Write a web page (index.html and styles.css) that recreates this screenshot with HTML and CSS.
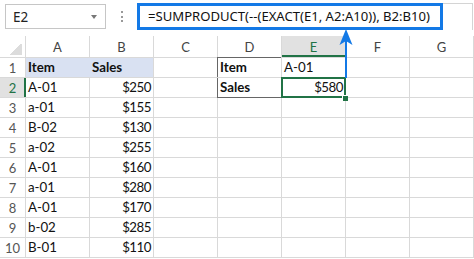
FILE: index.html
```html
<!DOCTYPE html>
<html lang="en">
<head>
  <meta charset="UTF-8">
  <title>SUMPRODUCT EXACT</title>
  <link rel="stylesheet" href="styles.css">
</head>
<body>
  <div class="sheet">

    <!-- Formula bar -->
    <div class="formula-bar">
      <div class="name-box"><span>E2</span><span class="caret"></span></div>
      <div class="dots"><i></i><i></i><i></i></div>
      <div class="formula-input">
        <div class="formula-box">=SUMPRODUCT(--(EXACT(E1, A2:A10)), B2:B10)</div>
      </div>
    </div>

    <!-- Worksheet grid -->
    <div class="grid">
      <div class="hd corner"></div>
      <div class="hd">A</div>
      <div class="hd">B</div>
      <div class="hd">C</div>
      <div class="hd">D</div>
      <div class="hd sel-col">E</div>
      <div class="hd">F</div>
      <div class="hd">G</div>

      <div class="rn">1</div>
      <div class="c b fill fill-join">Item</div>
      <div class="c b fill">Sales</div>
      <div class="c"></div>
      <div class="c b box-top-left">Item</div>
      <div class="c">A-01</div>
      <div class="c"></div>
      <div class="c"></div>

      <div class="rn sel-row">2</div>
      <div class="c">A-01</div>
      <div class="c num">$250</div>
      <div class="c"></div>
      <div class="c b box-bottom-left">Sales</div>
      <div class="c num active">$580</div>
      <div class="c"></div>
      <div class="c"></div>

      <div class="rn">3</div>
      <div class="c">a-01</div>
      <div class="c num">$155</div>
      <div class="c"></div><div class="c"></div><div class="c"></div><div class="c"></div><div class="c"></div>

      <div class="rn">4</div>
      <div class="c">B-02</div>
      <div class="c num">$130</div>
      <div class="c"></div><div class="c"></div><div class="c"></div><div class="c"></div><div class="c"></div>

      <div class="rn">5</div>
      <div class="c">a-02</div>
      <div class="c num">$255</div>
      <div class="c"></div><div class="c"></div><div class="c"></div><div class="c"></div><div class="c"></div>

      <div class="rn">6</div>
      <div class="c">A-01</div>
      <div class="c num">$160</div>
      <div class="c"></div><div class="c"></div><div class="c"></div><div class="c"></div><div class="c"></div>

      <div class="rn">7</div>
      <div class="c">a-01</div>
      <div class="c num">$280</div>
      <div class="c"></div><div class="c"></div><div class="c"></div><div class="c"></div><div class="c"></div>

      <div class="rn">8</div>
      <div class="c">A-01</div>
      <div class="c num">$170</div>
      <div class="c"></div><div class="c"></div><div class="c"></div><div class="c"></div><div class="c"></div>

      <div class="rn">9</div>
      <div class="c">b-02</div>
      <div class="c num">$285</div>
      <div class="c"></div><div class="c"></div><div class="c"></div><div class="c"></div><div class="c"></div>

      <div class="rn">10</div>
      <div class="c">B-01</div>
      <div class="c num">$110</div>
      <div class="c"></div><div class="c"></div><div class="c"></div><div class="c"></div><div class="c"></div>
    </div>

    <!-- Callout arrow from E1 up to the formula -->
    <svg class="arrow" width="474" height="259" viewBox="0 0 474 259">
      <rect x="345" y="38" width="2" height="40" fill="#1379e6"/>
      <polygon points="346,29 352.5,45 346,41 339.5,45" fill="#1379e6"/>
    </svg>
  </div>
</body>
</html>
```

FILE: styles.css
```css
body {
  margin: 0;
  background: #fff;
  font-family: Lato, "Liberation Sans", sans-serif;
}

.sheet {
  position: relative;
  width: 474px;
  height: 259px;
  overflow: hidden;
}

/* formula bar */
.formula-bar {
  display: flex;
  align-items: center;
  height: 27px;
  padding-top: 3px;
}

.name-box {
  margin-left: 5px;
  width: 101px;
  height: 25px;
  box-sizing: border-box;
  border: 1px solid #c6c6c6;
  display: flex;
  align-items: center;
  justify-content: space-between;
  padding: 0 8px 0 7px;
  font-family: "Noto Sans", sans-serif;
  font-size: 13.5px;
  color: #222;
}

.caret {
  width: 0;
  height: 0;
  border-left: 3px solid transparent;
  border-right: 3px solid transparent;
  border-top: 4px solid #777;
}

.dots {
  width: 31px;
  display: flex;
  flex-direction: column;
  align-items: center;
  gap: 2.5px;
}

.dots i {
  display: block;
  width: 2px;
  height: 2px;
  background: #999;
}

.formula-input {
  flex: 1;
  height: 27px;
  box-sizing: border-box;
  border-top: 1px solid #d4d4d4;
  border-right: 1px solid #d4d4d4;
  margin-right: 1px;
  display: flex;
}

.formula-box {
  width: 306px;
  height: 27px;
  margin-top: -1px;
  box-sizing: border-box;
  border: 3px solid #1379e6;
  padding-left: 8px;
  font-family: "Noto Sans", sans-serif;
  font-size: 13.1px;
  line-height: 21px;
  color: #111;
  white-space: nowrap;
}

/* grid */
.grid {
  display: grid;
  grid-template-columns: 25px repeat(7, 63px);
  grid-template-rows: 21px repeat(10, 19px);
  gap: 1px;
  width: max-content;
  margin-top: 6px;
  padding: 0 1px 1px 0;
  background: #d9d9d9;
}

.hd {
  background: #fff;
  text-align: center;
  font-size: 13px;
  line-height: 20px;
  padding-top: 1px;
  color: #444;
}

.corner {
  background: linear-gradient(135deg, #fff 50%, #dcdcdc 50%) no-repeat 9px 8px / 13px 11px, #fff;
}

.sel-col {
  background: #e1e1e1;
  color: #217346;
  box-shadow: inset 0 -2px 0 #217346;
}

.rn {
  background: #fff;
  text-align: center;
  font-size: 13px;
  line-height: 20px;
  color: #555;
}

.sel-row {
  background: #e1e1e1;
  color: #217346;
  box-shadow: 1px 0 0 #217346, inset -1px 0 0 #217346;
}

.c {
  position: relative;
  background: #fff;
  padding: 0 2px;
  font-size: 13.3px;
  line-height: 19px;
  color: #111;
  white-space: nowrap;
}

.num {
  text-align: right;
  letter-spacing: -0.5px;
}

.b {
  font-weight: bold;
}

.fill {
  background: #d9e1f2;
}

.fill-join {
  box-shadow: 1px 0 0 #d9e1f2;
}

.box-top-left {
  box-shadow: -1px 0 0 #666, 0 -1px 0 #666, -1px -1px 0 #666;
}

.box-bottom-left {
  box-shadow: -1px 0 0 #666, 0 1px 0 #666, -1px 1px 0 #666;
}

.active {
  z-index: 1;
  box-shadow: 0 0 0 1px #217346, inset 0 0 0 1px #217346;
}

.active::after {
  content: "";
  position: absolute;
  right: -3px;
  bottom: -4px;
  width: 5px;
  height: 5px;
  background: #217346;
  border-top: 1px solid #fff;
  border-left: 1px solid #fff;
}

.arrow {
  position: absolute;
  left: 0;
  top: 0;
  z-index: 2;
  pointer-events: none;
}
```
